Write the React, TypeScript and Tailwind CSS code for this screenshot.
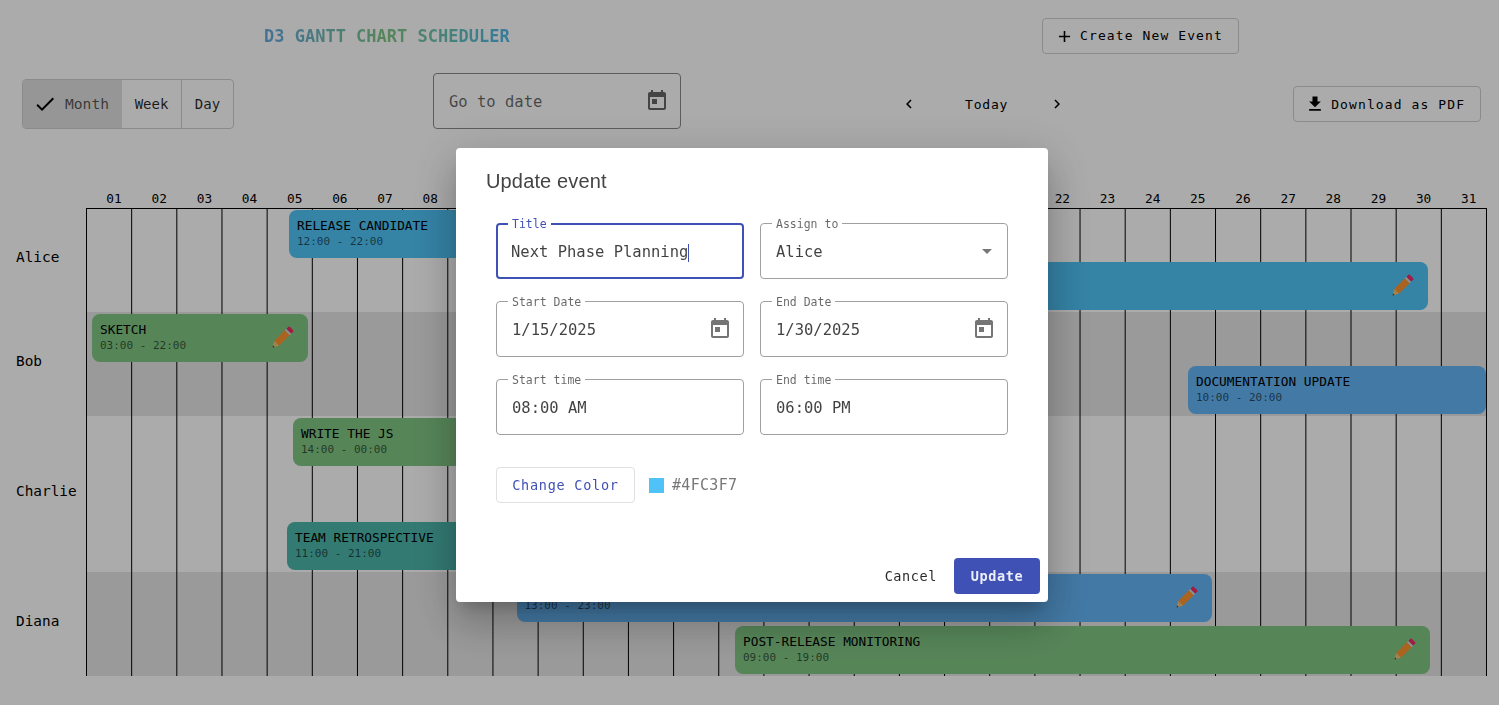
import type { ReactNode } from 'react';

const CHECK = 'M9 16.17 4.83 12l-1.42 1.41L9 19 21 7l-1.41-1.41z';
const TODAY = 'M19 3h-1V1h-2v2H8V1H6v2H5c-1.11 0-1.99.9-1.99 2L3 19c0 1.1.89 2 2 2h14c1.1 0 2-.9 2-2V5c0-1.1-.9-2-2-2zm0 16H5V8h14v11zM7 10h5v5H7z';
const DOWNLOAD = 'M19 9h-4V3H9v6H5l7 7 7-7zM5 18v2h14v-2H5z';
const ADD = 'M19 13h-6v6h-2v-6H5v-2h6V5h2v6h6v2z';
const NEXT = 'M10 6 8.59 7.41 13.17 12l-4.58 4.59L10 18l6-6z';
const PREV = 'M15.41 7.41 14 6l-6 6 6 6 1.41-1.41L10.83 12z';
const DROP = 'M7 10l5 5 5-5z';

interface GanttEvent {
  title: string;
  time: string;
  left: number;
  top: number;
  width: number;
  color: string;
  pencil?: boolean;
}

const days = Array.from({ length: 31 }, (_, i) => String(i + 1).padStart(2, '0'));

const rows = [
  { name: 'Alice', height: 104, shaded: false },
  { name: 'Bob', height: 104, shaded: true },
  { name: 'Charlie', height: 156, shaded: false },
  { name: 'Diana', height: 104, shaded: true },
];

// left/top are relative to the chart body (x 86, y 208)
const events: GanttEvent[] = [
  { title: 'RELEASE CANDIDATE', time: '12:00 - 22:00', left: 203, top: 2, width: 400, color: '#4FC3F7' },
  { title: '', time: '', left: 420, top: 54, width: 922, color: '#4FC3F7', pencil: true },
  { title: 'SKETCH', time: '03:00 - 22:00', left: 6, top: 106, width: 216, color: '#81C784', pencil: true },
  { title: 'DOCUMENTATION UPDATE', time: '10:00 - 20:00', left: 1102, top: 158, width: 298, color: '#64B5F6' },
  { title: 'WRITE THE JS', time: '14:00 - 00:00', left: 207, top: 210, width: 400, color: '#81C784' },
  { title: 'TEAM RETROSPECTIVE', time: '11:00 - 21:00', left: 201, top: 314, width: 400, color: '#4DB6AC' },
  { title: '', time: '13:00 - 23:00', left: 430.5, top: 366, width: 695.5, color: '#64B5F6', pencil: true },
  { title: 'POST-RELEASE MONITORING', time: '09:00 - 19:00', left: 649, top: 418, width: 695, color: '#81C784', pencil: true },
];

function Icon({ d, size, className }: { d: string; size: number; className?: string }) {
  return (
    <svg width={size} height={size} viewBox="0 0 24 24" fill="currentColor" className={className}>
      <path d={d} />
    </svg>
  );
}

function Pencil() {
  return (
    <svg width="24" height="24" viewBox="0 0 24 24" className="shrink-0 self-center">
      <g transform="rotate(45 12 12)">
        <rect x="8.6" y="-1.4" width="6.8" height="4" rx="1" fill="#F02A66" />
        <rect x="8.6" y="2.6" width="6.8" height="2" fill="#D8D8DD" />
        <rect x="8.6" y="4.6" width="6.8" height="15" fill="#FF9630" />
        <path d="M8.6 19.6h6.8L12 25.4z" fill="#F2C27A" />
        <path d="M11 23.6h2l-1 1.8z" fill="#292F33" />
      </g>
    </svg>
  );
}

function Field({ label, focused, children }: { label: string; focused?: boolean; children: ReactNode }) {
  return (
    <div
      className={`relative h-14 w-[248px] rounded flex items-center justify-between text-[15.5px] text-black/75 ${
        focused ? 'border-2 border-[#3F51B5] pl-[13px] pr-[10px]' : 'border border-[#a0a0a0] pl-[15px] pr-[11px]'
      }`}
    >
      <span
        className={`absolute bg-white px-1 text-[11.5px] leading-none ${
          focused ? 'left-[10px] -top-[6px] text-[#3F51B5]' : 'left-[11px] -top-[5px] text-black/60'
        }`}
      >
        {label}
      </span>
      {children}
    </div>
  );
}

function EventDialog() {
  return (
    <div className="fixed inset-0 bg-black/33 pt-[148px] pl-[456px]">
      <div className="w-[592px] h-[454px] bg-white rounded flex flex-col shadow-[0_11px_15px_-7px_rgba(0,0,0,0.2),0_24px_38px_3px_rgba(0,0,0,0.14),0_9px_46px_8px_rgba(0,0,0,0.12)]">
        <h2 className="pl-[30px] pt-[20px] h-[75px] text-[20px] leading-[26px] tracking-[0.15px] text-[#444] font-['Liberation_Sans',sans-serif]">
          Update event
        </h2>
        <div className="pl-10 grid grid-cols-[248px_248px] gap-x-4 gap-y-[22px]">
          <Field label="Title" focused>
            <span className="flex items-center pt-1">
              Next Phase Planning
              <span className="w-px h-[18px] bg-[#3F51B5]" />
            </span>
          </Field>
          <Field label="Assign to">
            <span className="pt-1">Alice</span>
            <Icon d={DROP} size={24} className="text-[#777] -mr-[3px]" />
          </Field>
          <Field label="Start Date">
            <span className="pt-1">1/15/2025</span>
            <Icon d={TODAY} size={24} className="text-[#757575]" />
          </Field>
          <Field label="End Date">
            <span className="pt-1">1/30/2025</span>
            <Icon d={TODAY} size={24} className="text-[#757575]" />
          </Field>
          <Field label="Start time">
            <span className="pt-1">08:00 AM</span>
          </Field>
          <Field label="End time">
            <span className="pt-1">06:00 PM</span>
          </Field>
        </div>
        <div className="pl-10 mt-8 flex items-center">
          <button className="h-9 w-[139px] rounded border border-[#e0e0e0] text-[13.5px] tracking-[0.75px] text-[#3F51B5]">
            Change Color
          </button>
          <span className="ml-[14px] w-[15px] h-[15px] bg-[#4FC3F7]" />
          <span className="ml-2 text-[15px] tracking-[0.3px] text-[#777]">#4FC3F7</span>
        </div>
        <div className="mt-auto pb-2 pr-2 flex items-center justify-end">
          <button className="mr-[17px] text-[13.5px] tracking-[0.6px] text-black/85">Cancel</button>
          <button className="h-9 w-[86px] rounded bg-[#3F51B5] text-[13.5px] font-bold tracking-[0.6px] text-white/90">
            Update
          </button>
        </div>
      </div>
    </div>
  );
}

export default function App() {
  return (
    <div className="relative h-[705px] overflow-hidden bg-white text-black font-['DejaVu_Sans_Mono','Liberation_Mono',monospace]">
      <div className="pt-[18px] pl-[264px] flex items-center">
        <h1 className="w-[778px] pt-[2px] text-[17px] font-bold">
          <span className="bg-linear-to-r from-[#64A8E0] via-[#81C784] to-[#4FB8E8] bg-clip-text text-transparent">
            D3 GANTT CHART SCHEDULER
          </span>
        </h1>
        <button className="h-9 w-[197px] pr-[3px] rounded border border-[#d0d0d0] flex items-center justify-center gap-[6px] text-[13px] tracking-[1.1px]">
          <Icon d={ADD} size={19} />
          Create New Event
        </button>
      </div>

      <div className="mt-[19px] h-[62px] flex items-center pl-[22px]">
        <div className="h-[50px] w-[212px] flex rounded border border-[#d0d0d0] text-[14px]">
          <div className="w-[99px] pr-[3px] bg-[#e0e0e0] flex items-center justify-center gap-[8px] text-[14.6px] text-black/65 rounded-l">
            <Icon d={CHECK} size={24} className="text-black" />
            Month
          </div>
          <div className="w-[60px] flex items-center justify-center border-r border-[#d0d0d0] text-black/85">Week</div>
          <div className="flex-1 flex items-center justify-center text-black/85">Day</div>
        </div>
        <div className="ml-[199px] self-start h-14 w-[248px] rounded border border-[#8a8a8a] flex items-center justify-between pl-[15px] pr-[11px] text-[15.5px] text-black/60">
          <span className="pt-1">Go to date</span>
          <Icon d={TODAY} size={24} className="text-[#666]" />
        </div>
        <div className="ml-[219px] flex items-center text-[13px] tracking-[0.8px]">
          <Icon d={PREV} size={18} />
          <span className="ml-[47px] mr-[40px] pt-[2px]">Today</span>
          <Icon d={NEXT} size={18} />
        </div>
        <button className="ml-[227px] h-9 w-[188px] pr-[4px] rounded border border-[#d0d0d0] flex items-center justify-center gap-[6px] text-[13px] tracking-[1.1px]">
          <Icon d={DOWNLOAD} size={20} />
          <span className="pt-[1px]">Download as PDF</span>
        </button>
      </div>

      <div className="mt-[56px] pl-[86px] flex h-[17px] items-center">
        {days.map((d) => (
          <div key={d} className="flex-none w-[45.16px] pl-[11px] text-center text-[12.8px] leading-none">
            {d}
          </div>
        ))}
      </div>

      <div className="flex">
        <div className="w-[86px] flex flex-col">
          {rows.map((r) => (
            <div key={r.name} className="pl-4 pb-[4px] flex items-center text-[14.4px]" style={{ height: r.height }}>
              {r.name}
            </div>
          ))}
        </div>
        <div className="relative w-[1401px]">
          {rows.map((r) => (
            <div key={r.name} className={r.shaded ? 'bg-[#e6e6e6]' : ''} style={{ height: r.height }} />
          ))}
          <svg className="absolute left-0 top-0" width="1401" height="468">
            <line x1="0" x2="1401" y1="0.5" y2="0.5" stroke="#000" />
            {Array.from({ length: 32 }, (_, i) => (
              <line key={i} x1={0.5 + i * 45.161} x2={0.5 + i * 45.161} y1="0" y2="468" stroke="#000" />
            ))}
          </svg>
          {events.map((ev) => (
            <div
              key={`${ev.left}-${ev.top}`}
              className="absolute h-12 rounded-lg pl-2 pr-[14px] flex justify-between"
              style={{ left: ev.left, top: ev.top, width: ev.width, backgroundColor: ev.color }}
            >
              <div className="flex flex-col pt-2">
                <span className="min-h-4 text-[12.8px] leading-[16px]">{ev.title}</span>
                <span className="text-[11px] leading-[16px] text-black/60">{ev.time}</span>
              </div>
              {ev.pencil && <Pencil />}
            </div>
          ))}
        </div>
      </div>

      <EventDialog />
    </div>
  );
}
